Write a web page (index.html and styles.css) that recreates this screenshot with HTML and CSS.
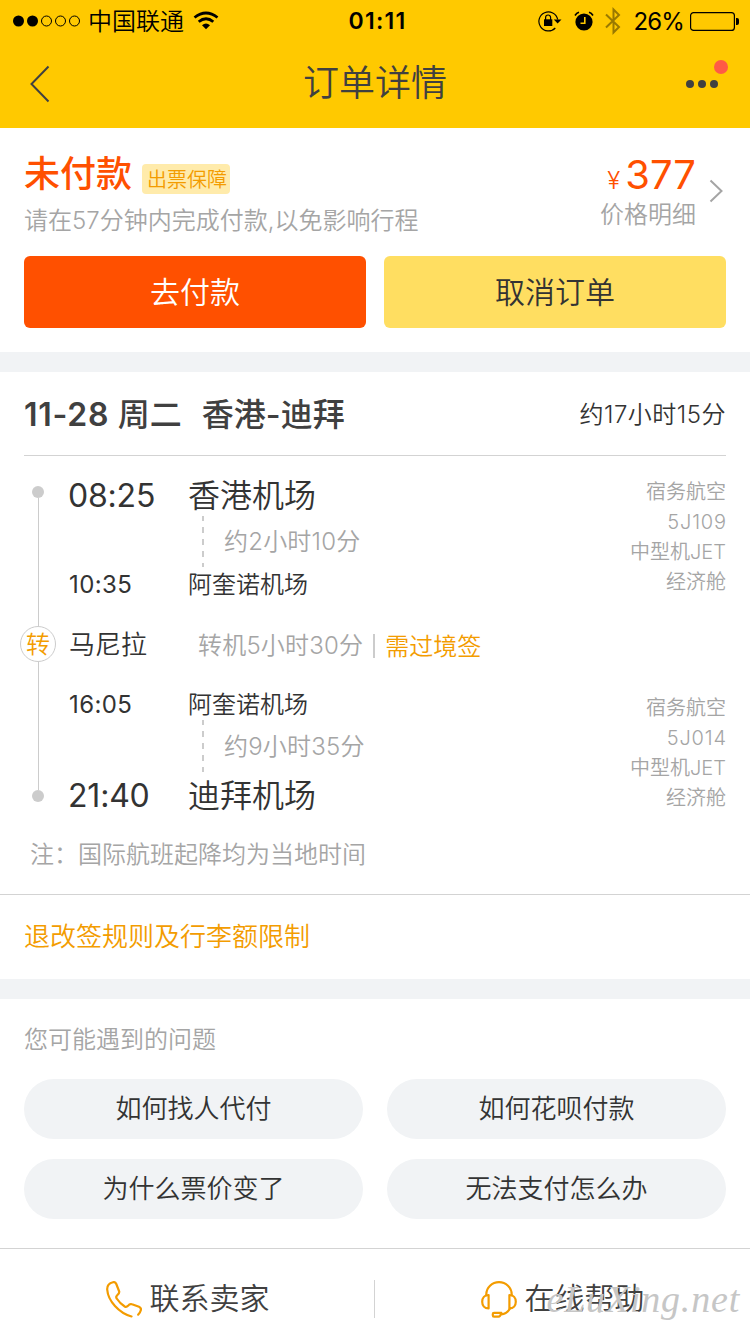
FILE: index.html
```html
<!DOCTYPE html>
<html lang="zh-CN">
<head>
  <meta charset="UTF-8" />
  <meta name="viewport" content="width=device-width, initial-scale=1" />
  <title>订单详情</title>
  <link rel="stylesheet" href="styles.css">
</head>
<body>

<header class="header">
  <div class="status-bar">
    <div class="status-left">
      <svg class="signal" width="68" height="12" viewBox="0 0 68 12">
        <circle cx="5.5" cy="6" r="5.5" />
        <circle cx="19.5" cy="6" r="5.5" />
        <circle class="empty" cx="33.5" cy="6" r="5" />
        <circle class="empty" cx="47.5" cy="6" r="5" />
        <circle class="empty" cx="61.5" cy="6" r="5" />
      </svg>
      <span class="carrier-name">中国联通</span>
      <svg class="wifi" width="26" height="20" viewBox="0 0 26 20">
        <path d="M1.5 6.5 Q13 -2.5 24.5 6.5" stroke-width="2.8" />
        <path d="M5.7 10.8 Q13 4.6 20.3 10.8" stroke-width="2.8" />
        <path class="fill" d="M9 14.3 Q13 10.7 17 14.3 L13 18.3 Z" />
      </svg>
    </div>
    <span class="clock">01:11</span>
    <div class="status-right">
      <svg width="24" height="22" viewBox="0 0 24 22">
        <path class="thin" d="M17.3 18 A9.5 9.5 0 1 1 19.7 9.5" />
        <path d="M15.8 9.5 H23.5 L19.6 13.5 Z" />
        <rect x="6" y="9.3" width="8.3" height="6.7" />
        <path class="thin" d="M7.6 10 V7.5 a2.5 2.5 0 0 1 5 0 V10" />
      </svg>
      <svg class="alarm" width="20" height="20" viewBox="0 0 20 20">
        <circle cx="10" cy="11" r="8.6" />
        <path class="bell" d="M1 4.5 Q2.5 2 5 1.2 M15 1.2 Q17.5 2 19 4.5" />
        <path class="hands" d="M10.8 6 V12.2 H6.5" />
      </svg>
      <svg class="bluetooth" width="18" height="28" viewBox="0 0 18 28">
        <path d="M2 7.5 L15 20 L9.5 25.5 V2.5 L15 8 L2 20.5" />
      </svg>
      <span class="percent">26%</span>
      <svg class="battery" width="49" height="19" viewBox="0 0 49 19">
        <rect class="thin" x="0.6" y="0.6" width="43.8" height="17.8" rx="3" />
        <path d="M46 6 h1 q2 0 2 2 v3 q0 2 -2 2 h-1 Z" />
      </svg>
    </div>
  </div>
  <div class="nav">
    <svg class="back" width="20" height="38" viewBox="0 0 20 38">
      <path d="M18.5 1.5 L1.5 19 L18.5 36.5" />
    </svg>
    <h1>订单详情</h1>
    <div class="more">
      <i></i><i></i><i></i>
      <b class="red-dot"></b>
    </div>
  </div>
</header>

<section class="pay">
  <div class="pay-top">
    <div class="pay-info">
      <div class="pay-status">
        <strong>未付款</strong>
        <span class="tag">出票保障</span>
      </div>
      <p>请在57分钟内完成付款,以免影响行程</p>
    </div>
    <div class="price">
      <div class="amount"><small>¥</small>377</div>
      <p>价格明细</p>
    </div>
    <svg class="arrow" width="14" height="24" viewBox="0 0 14 24">
      <path d="M1.5 1.5 L12.5 12 L1.5 22.5" />
    </svg>
  </div>
  <div class="pay-buttons">
    <button class="btn btn-pay">去付款</button>
    <button class="btn btn-cancel">取消订单</button>
  </div>
</section>

<section class="flight">
  <div class="flight-head">
    <h2><span class="date">11-28 </span><span class="weekday">周二</span><span>香港-迪拜</span></h2>
    <span class="total">约17小时15分</span>
  </div>

  <div class="timeline">
    <div class="rail">
      <span class="dot"></span>
      <span class="line"></span>
      <span class="badge">转</span>
      <span class="line"></span>
      <span class="dot"></span>
    </div>
    <div class="legs">
      <div class="leg">
        <div class="stops">
          <div class="stop main"><time>08:25</time><span>香港机场</span></div>
          <div class="duration">约2小时10分</div>
          <div class="stop"><time>10:35</time><span>阿奎诺机场</span></div>
        </div>
        <ul class="plane">
          <li>宿务航空</li>
          <li class="flight-no">5J109</li>
          <li>中型机JET</li>
          <li>经济舱</li>
        </ul>
      </div>
      <div class="transfer">
        <span class="city">马尼拉</span>
        <span class="wait">转机5小时30分</span>
        <span class="visa">需过境签</span>
      </div>
      <div class="leg leg-second">
        <div class="stops">
          <div class="stop"><time>16:05</time><span>阿奎诺机场</span></div>
          <div class="duration">约9小时35分</div>
          <div class="stop main"><time>21:40</time><span>迪拜机场</span></div>
        </div>
        <ul class="plane">
          <li>宿务航空</li>
          <li class="flight-no">5J014</li>
          <li>中型机JET</li>
          <li>经济舱</li>
        </ul>
      </div>
    </div>
  </div>
  <p class="note">注：国际航班起降均为当地时间</p>
</section>

<div class="rules">退改签规则及行李额限制</div>

<section class="questions">
  <h3>您可能遇到的问题</h3>
  <div class="question-list">
    <button>如何找人代付</button>
    <button>如何花呗付款</button>
    <button>为什么票价变了</button>
    <button>无法支付怎么办</button>
  </div>
</section>

<footer class="footer">
  <div class="contact">
    <svg width="36" height="37" viewBox="0 0 36 37">
      <path d="M25.5 35.5 C13 32 2 20 1.2 8.5 C1 4.5 3.5 2 7 1.2 C8.7 .8 9.7 1.5 10.3 3 L13.2 10.5 C13.6 12 12.5 13 11 14.5 C10 15.5 10 16.5 10.7 17.5 C13 21 16 23.8 18.7 25.5 C20 26.2 21 25.9 22 24.8 C23.5 22.8 24.5 22.7 26 23.3 L33 25.8 C34.7 26.5 35.2 27.8 34.8 29.3 C34.3 31.2 33.5 32.6 32.2 33.7" />
    </svg>
    <span>联系卖家</span>
  </div>
  <div class="contact help">
    <svg width="36" height="37" viewBox="0 0 36 37">
      <path d="M5.3 14.5 V13.5 C5.3 6.5 11 1.2 18 1.2 S30.7 6.5 30.7 13.5 V14.5" />
      <path d="M7.6 14 V27.5 C3.5 27.5 1.2 24.5 1.2 20.7 S3.5 14 7.6 14 Z" />
      <path d="M28.4 14 V27.5 C32.5 27.5 34.8 24.5 34.8 20.7 S32.5 14 28.4 14 Z" />
      <path d="M29 27.5 C27 31 24 33 20.3 33.3 M20.3 31.8 H13 Q11.8 31.8 11.8 33 V34.2 Q11.8 35.6 13 35.6 H17.5 Q19.5 35.6 20.3 31.8" />
    </svg>
    <span>在线帮助</span>
  </div>
  <span class="watermark">eLuXing.net</span>
</footer>

</body>
</html>
```
FILE: styles.css
```css
* {
  box-sizing: border-box;
}
body {
  margin: 0;
  width: 750px;
  height: 1334px;
  overflow: hidden;
  background: #fff;
  color: #333;
  font-family: Inter, "Noto Sans CJK SC", sans-serif;
  font-size: 24px;
  font-weight: 350;
}
h1, h2, h3, p, ul {
  margin: 0;
  padding: 0;
  font-weight: inherit;
}
ul {
  list-style: none;
}
svg {
  display: block;
  flex: none;
}
button {
  border: none;
  padding: 0 0 5px;
  font: inherit;
  color: inherit;
}

/* header */
.header {
  height: 128px;
  background: #ffc900;
}
.status-bar {
  display: grid;
  grid-template-columns: 1fr auto 1fr;
  align-items: center;
  height: 41px;
  padding: 0 11px 0 13px;
  color: #000;
  line-height: 41px;
}
.status-left, .status-right {
  display: flex;
  align-items: center;
}
.status-right {
  justify-content: flex-end;
}
.signal .empty {
  fill: none;
  stroke: #000;
}
.carrier-name {
  margin-left: 7px;
}
.wifi {
  margin-left: 9px;
  fill: none;
  stroke: #000;
}
.wifi .fill {
  fill: #000;
  stroke: none;
}
.clock {
  padding: 1px 0 0 3px;
  font-size: 23px;
  font-weight: 600;
  letter-spacing: 1.3px;
}
.thin {
  fill: none;
  stroke: #000;
  stroke-width: 1.2;
}
.alarm {
  margin-left: 12px;
}
.bell, .hands {
  fill: none;
  stroke: #000;
  stroke-width: 1.6;
}
.hands {
  stroke: #ffc900;
}
.bluetooth {
  margin-left: 10px;
  fill: none;
  stroke: #997900;
  stroke-width: 2;
}
.percent {
  margin: 0 6px 0 12px;
  font-weight: 400;
  letter-spacing: -0.9px;
}
.nav {
  display: grid;
  grid-template-columns: 1fr auto 1fr;
  align-items: center;
  height: 86px;
  padding: 0 30px;
  color: #404040;
}
.nav h1 {
  margin-top: -3px;
  font-size: 36px;
  line-height: 80px;
}
.back {
  fill: none;
  stroke: #404040;
  stroke-width: 2;
}
.more {
  position: relative;
  display: flex;
  justify-content: flex-end;
  gap: 4px;
  padding-right: 2px;
}
.more i {
  width: 8px;
  height: 8px;
  border-radius: 50%;
  background: #404040;
}
.red-dot {
  position: absolute;
  top: -20px;
  right: -8px;
  width: 14px;
  height: 14px;
  border-radius: 50%;
  background: #ff5b45;
}

/* payment */
.pay {
  height: 244px;
  padding: 24px 24px 0;
  border-bottom: 20px solid #f1f3f5;
}
.pay-top {
  display: flex;
  height: 104px;
}
.pay-info {
  flex: 1;
}
.pay-status {
  display: flex;
  height: 44px;
}
.pay-status strong {
  color: #ff5000;
  font-size: 36px;
  font-weight: 500;
  line-height: 45px;
}
.tag {
  height: 30px;
  margin: 12px 0 0 10px;
  padding: 0 3px 0 5px;
  border-radius: 4px;
  background: #ffebab;
  color: #f39c00;
  font-size: 20px;
  line-height: 32px;
}
.pay-info p, .price p {
  color: #a5a5a5;
  line-height: 49px;
}
.price {
  text-align: right;
}
.amount {
  height: 38px;
  color: #ff5000;
  font-size: 40px;
  font-weight: 400;
  line-height: 45px;
}
.amount small {
  margin-right: 5px;
  font-size: 24px;
  font-weight: 350;
}
.arrow {
  margin: 27px 3px 0 13px;
  fill: none;
  stroke: #a5a5a5;
  stroke-width: 2;
}
.pay-buttons {
  display: grid;
  grid-template-columns: 1fr 1fr;
  gap: 18px;
}
.btn {
  height: 72px;
  border-radius: 6px;
  font-size: 30px;
}
.btn-pay {
  background: #ff5000;
  color: #fff;
}
.btn-cancel {
  background: #ffde61;
}

/* flight */
.flight {
  height: 523px;
  padding: 0 24px;
  border-bottom: 1px solid #d3d3d3;
}
.flight-head {
  display: flex;
  justify-content: space-between;
  height: 84px;
  border-bottom: 1px solid #d3d3d3;
  line-height: 86px;
}
.flight-head h2 {
  color: #404040;
  font-size: 32px;
  font-weight: 500;
}
.date {
  font-weight: 600;
  letter-spacing: 0.7px;
}
.weekday {
  margin-right: 20px;
}
.total {
  letter-spacing: 0.5px;
}
.timeline {
  display: flex;
  gap: 13px;
  height: 363px;
  margin-left: -4px;
  padding-top: 19px;
}
.rail {
  display: flex;
  flex-direction: column;
  align-items: center;
  width: 36px;
  height: 316px;
  margin-top: 11px;
}
.dot {
  width: 12px;
  height: 12px;
  border-radius: 50%;
  background: #ccc;
}
.line {
  flex: 1;
  width: 1px;
  background: #ccc;
}
.badge {
  width: 36px;
  height: 36px;
  border: 1px solid #ccc;
  border-radius: 50%;
  color: #f39c00;
  line-height: 35px;
  text-align: center;
}
.legs {
  flex: 1;
}
.leg {
  display: flex;
  justify-content: space-between;
}
.stop {
  display: flex;
  height: 34px;
  line-height: 36px;
}
.stop time {
  width: 119px;
  font-weight: 400;
  letter-spacing: 0.4px;
}
.stop.main {
  height: 40px;
  font-size: 32px;
  line-height: 42px;
}
.stop.main time {
  margin-left: -1px;
  width: 120px;
  letter-spacing: -0.2px;
}
.duration {
  height: 52px;
  margin-left: 133px;
  padding-left: 22px;
  background: repeating-linear-gradient(#ccc 0 5px, transparent 5px 11px, #ccc 11px 12px) 0 1px / 2px 52px no-repeat;
  color: #a5a5a5;
  letter-spacing: 0.2px;
  line-height: 54px;
}
.plane {
  padding-top: 1px;
  color: #a5a5a5;
  font-size: 20px;
  line-height: 32px;
  text-align: right;
}
.plane li {
  height: 30px;
}
.flight-no {
  letter-spacing: 0.8px;
  margin-right: -0.8px;
}
.leg-second .plane {
  padding-top: 5px;
}
.leg-second .duration {
  height: 55px;
  margin-top: -1px;
  background-position: 0 0;
}
.transfer {
  display: flex;
  height: 86px;
  line-height: 87px;
}
.city {
  width: 129px;
  font-size: 26px;
}
.wait {
  color: #a5a5a5;
  letter-spacing: 0.2px;
  line-height: 90px;
}
.visa {
  height: 24px;
  margin: 33px 0 0 10px;
  padding-left: 10px;
  border-left: 2px solid #ccc;
  color: #f39c00;
  line-height: 25px;
}
.note {
  padding-left: 6px;
  color: #a5a5a5;
  line-height: 72px;
}
.rules {
  height: 104px;
  padding-left: 24px;
  border-bottom: 20px solid #f1f3f5;
  color: #f39c00;
  font-size: 26px;
  line-height: 83px;
}

/* questions */
.questions {
  height: 249px;
  padding: 0 24px;
}
.questions h3 {
  height: 80px;
  color: #a5a5a5;
  font-size: 24px;
  line-height: 82px;
}
.question-list {
  display: grid;
  grid-template-columns: 1fr 1fr;
  gap: 20px 24px;
}
.question-list button {
  height: 60px;
  border-radius: 30px;
  background: #f1f3f5;
  font-size: 26px;
}

/* bottom bar */
.footer {
  position: relative;
  display: grid;
  grid-template-columns: 374px 1fr;
  height: 86px;
  padding-top: 31px;
  border-top: 1px solid #d3d3d3;
}
.contact {
  display: flex;
  justify-content: center;
  gap: 8px;
  height: 38px;
  padding-left: 1px;
  color: #404040;
  font-size: 30px;
  line-height: 37px;
}
.help {
  padding-left: 0;
  border-left: 1px solid #d3d3d3;
}
.contact svg {
  margin-top: 1px;
  fill: none;
  stroke: #f39c00;
  stroke-width: 2.2;
  stroke-linecap: round;
  stroke-linejoin: round;
}
.watermark {
  position: absolute;
  right: 10px;
  top: 28px;
  color: #c6c6c6;
  font: italic 38px/44px "Liberation Serif", cursive;
  letter-spacing: 0.8px;
}
```
